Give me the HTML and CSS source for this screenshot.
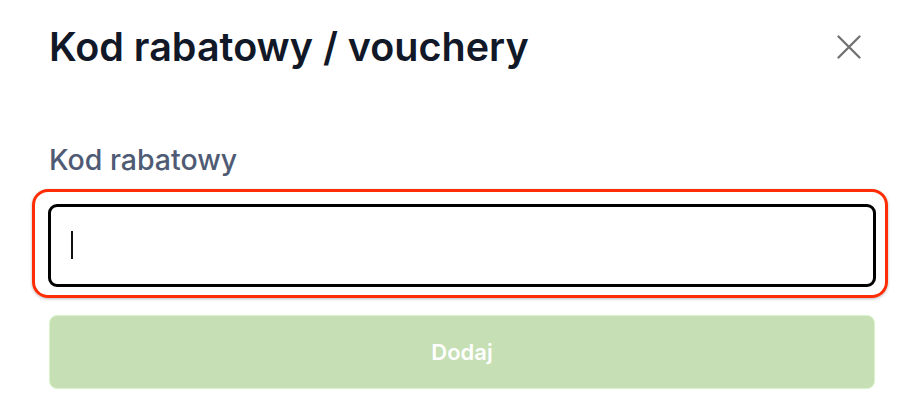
FILE: index.html
```html
<!DOCTYPE html>
<html lang="pl">
<head>
<meta charset="utf-8">
<title>Kod rabatowy / vouchery</title>
<link rel="stylesheet" href="styles.css">
</head>
<body>
<div class="dialog">
  <div class="header">
    <h1 class="title">Kod rabatowy / vouchery</h1>
    <button class="close" type="button" aria-label="Zamknij">
      <svg width="24" height="24" viewBox="0 0 24 24" fill="none" stroke="currentColor" stroke-width="2.3" stroke-linecap="round">
        <path d="M1.5 1.5 L22.5 22.5 M22.5 1.5 L1.5 22.5"/>
      </svg>
    </button>
  </div>
  <label class="label" for="code">Kod rabatowy</label>
  <div class="ring">
    <div class="field">
      <input id="code" class="input" type="text">
      <span class="caret"></span>
    </div>
  </div>
  <button class="submit" type="button">Dodaj</button>
</div>
</body>
</html>
```

FILE: styles.css
```css
html, body {
  margin: 0;
  padding: 0;
  background: #ffffff;
}

body {
  font-family: Inter, "Noto Sans", "Liberation Sans", sans-serif;
}

.dialog {
  display: flex;
  flex-direction: column;
  padding: 23px 25px 0 49px;
}

.header {
  display: flex;
  align-items: center;
  justify-content: space-between;
}

.title {
  margin: 0;
  font-size: 39.5px;
  line-height: 48px;
  font-weight: 600;
  color: #111827;
}

.close {
  display: flex;
  align-items: center;
  justify-content: center;
  width: 32px;
  height: 32px;
  margin-right: 10px;
  padding: 0;
  border: 0;
  background: transparent;
  color: #717171;
}

.label {
  margin-top: 72px;
  font-size: 28.5px;
  line-height: 34px;
  font-weight: 500;
  color: #4f5b74;
}

.ring {
  margin: 12px -13px 0 -17px;
  padding: 12px 9px 8px 13px;
  border: 3.5px solid #ff2d06;
  border-radius: 16px;
  box-shadow: 0 1px 3px rgba(0, 0, 0, 0.28);
}

.field {
  position: relative;
}

.input {
  display: block;
  box-sizing: border-box;
  width: 100%;
  height: 83px;
  margin: 0;
  padding: 0 22px;
  border: 3px solid #000000;
  border-radius: 9px;
  background: #ffffff;
  outline: none;
  font: inherit;
}

.caret {
  position: absolute;
  left: 23px;
  top: 27px;
  width: 1.5px;
  height: 28px;
  background: #111111;
}

.submit {
  box-sizing: border-box;
  height: 74px;
  margin-top: 17px;
  padding: 0;
  border: 1.5px solid #d8f4c8;
  border-radius: 8px;
  background: #c6dfb5;
  color: #ffffff;
  font-family: inherit;
  font-size: 22px;
  font-weight: 600;
}
```
